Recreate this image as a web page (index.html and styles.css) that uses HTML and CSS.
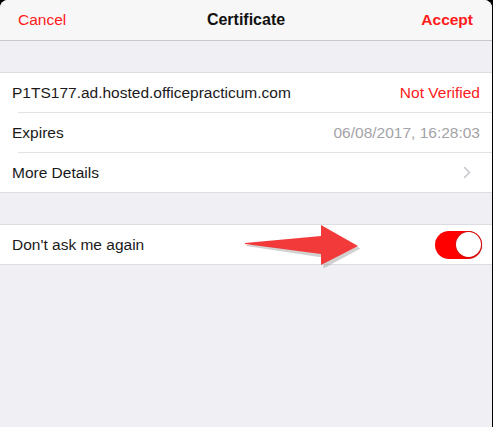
FILE: index.html
```html
<!DOCTYPE html>
<html>
<head>
<meta charset="utf-8">
<link rel="stylesheet" href="styles.css">
</head>
<body>
<div class="screen">
  <header class="nav">
    <span class="nav-btn">Cancel</span>
    <span class="nav-title">Certificate</span>
    <span class="nav-btn nav-accept">Accept</span>
  </header>

  <section class="group group-first">
    <div class="row">
      <span class="label">P1TS177.ad.hosted.officepracticum.com</span>
      <span class="value value-red">Not Verified</span>
    </div>
    <div class="sep"></div>
    <div class="row">
      <span class="label">Expires</span>
      <span class="value value-gray">06/08/2017, 16:28:03</span>
    </div>
    <div class="sep"></div>
    <div class="row">
      <span class="label">More Details</span>
      <svg class="chevron" width="8" height="13" viewBox="0 0 8 13"><path d="M1.5 1.5 L6.5 6.5 L1.5 11.5" fill="none" stroke="#c7c7cc" stroke-width="1.6" stroke-linecap="round" stroke-linejoin="round"/></svg>
    </div>
  </section>

  <section class="group group-second">
    <div class="row">
      <span class="label">Don't ask me again</span>
      <span class="toggle"><span class="knob"></span></span>
    </div>
    <svg class="arrow" width="130" height="50" viewBox="0 0 130 50">
      <polygon points="3,19.5 80,13.5 79,2 117,23 80,43 79,32 3,20.5" fill="#9a9a9a" opacity="0.45" transform="translate(1.5,1.5)"/>
      <polygon points="3,19 79,12 79,1 116,22 79,41 79,30 3,20" fill="#f33a3a"/>
    </svg>
  </section>
</div>
</body>
</html>
```

FILE: styles.css
```css
html, body {
  margin: 0;
  padding: 0;
  background: #000;
}

body {
  width: 493px;
  height: 427px;
  overflow: hidden;
  font-family: "Liberation Sans", Arial, sans-serif;
}

.screen {
  width: 492px;
  height: 427px;
  background: #efeff4;
  border-radius: 8px 8px 0 0;
  overflow: hidden;
}

.nav {
  height: 40px;
  background: #f7f7f7;
  border-bottom: 1px solid #c8c7cc;
  display: flex;
  align-items: center;
  justify-content: space-between;
  padding: 0 19px 0 18px;
  position: relative;
}

.nav-btn {
  color: #fd1a1a;
  font-size: 15.5px;
}

.nav-accept {
  font-weight: bold;
}

.nav-title {
  position: absolute;
  left: 0;
  right: 0;
  text-align: center;
  font-weight: bold;
  font-size: 16px;
  color: #111;
  pointer-events: none;
}

.group {
  background: #fff;
  border-top: 1px solid #dddde1;
  border-bottom: 1px solid #dddde1;
  position: relative;
}

.group-first {
  margin-top: 31px;
}

.group-second {
  margin-top: 31px;
}

.row {
  height: 39px;
  display: flex;
  align-items: center;
  justify-content: space-between;
  padding: 0 12px 0 12px;
  font-size: 15.5px;
  color: #1a1a1a;
}

.sep {
  height: 1px;
  margin-left: 18px;
  background: #e2e2e6;
}

.value-red {
  color: #fd1a1a;
}

.value-gray {
  color: #a3a3a8;
}

.chevron {
  margin-right: 9px;
}

.toggle {
  width: 47px;
  height: 28px;
  border-radius: 14px;
  background: #ff0000;
  display: flex;
  align-items: center;
  justify-content: flex-end;
  padding-right: 1px;
  box-sizing: border-box;
  margin-right: -2px;
}

.knob {
  width: 25px;
  height: 25px;
  border-radius: 50%;
  background: #fff;
  box-shadow: 0 0 0 1px #d51010, 1px 1px 2px rgba(0,0,0,0.25);
}

.arrow {
  position: absolute;
  left: 242px;
  top: -1px;
}
```
